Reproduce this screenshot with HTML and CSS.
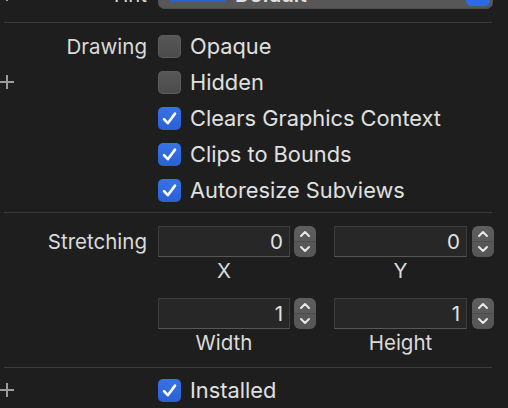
FILE: index.html
```html
<!DOCTYPE html>
<html>
<head>
<meta charset="utf-8">
<link rel="stylesheet" href="styles.css">
</head>
<body>
<div class="inspector">
  <div class="row tint-row">
    <div class="label"><span class="plus"></span><span>Tint</span></div>
    <div class="popup">
      <span class="swatch"></span>
      <span class="popup-text">Default</span>
      <span class="popup-stepper"></span>
    </div>
  </div>
  <div class="sep first"></div>

  <section class="drawing">
    <div class="row">
      <div class="label"><span></span><span>Drawing</span></div>
      <div class="check"><span class="box"></span><span>Opaque</span></div>
    </div>
    <div class="row">
      <div class="label"><span class="plus"></span><span></span></div>
      <div class="check"><span class="box"></span><span>Hidden</span></div>
    </div>
    <div class="row">
      <div class="label"></div>
      <div class="check"><span class="box on"><svg viewBox="0 0 23 23" width="23" height="23"><path d="M6 12.2 L9.8 16.2 L17 6.6" /></svg></span><span>Clears Graphics Context</span></div>
    </div>
    <div class="row">
      <div class="label"></div>
      <div class="check"><span class="box on"><svg viewBox="0 0 23 23" width="23" height="23"><path d="M6 12.2 L9.8 16.2 L17 6.6" /></svg></span><span>Clips to Bounds</span></div>
    </div>
    <div class="row">
      <div class="label"></div>
      <div class="check"><span class="box on"><svg viewBox="0 0 23 23" width="23" height="23"><path d="M6 12.2 L9.8 16.2 L17 6.6" /></svg></span><span>Autoresize Subviews</span></div>
    </div>
  </section>
  <div class="sep"></div>

  <section class="stretching">
    <div class="row stretch-row">
      <div class="label field-label"><span></span><span>Stretching</span></div>
      <div class="pairs">
        <div class="pair">
          <div class="stepper-group">
            <div class="field">0</div>
            <div class="stepper"><svg viewBox="0 0 22 31" width="22" height="31"><path d="M7 10 L11 6 L15 10" /><path d="M7 21 L11 25 L15 21" /></svg></div>
          </div>
          <div class="caption">X</div>
        </div>
        <div class="pair">
          <div class="stepper-group">
            <div class="field">0</div>
            <div class="stepper"><svg viewBox="0 0 22 31" width="22" height="31"><path d="M7 10 L11 6 L15 10" /><path d="M7 21 L11 25 L15 21" /></svg></div>
          </div>
          <div class="caption">Y</div>
        </div>
      </div>
    </div>
    <div class="row stretch-row second">
      <div class="label field-label"></div>
      <div class="pairs">
        <div class="pair">
          <div class="stepper-group">
            <div class="field">1</div>
            <div class="stepper"><svg viewBox="0 0 22 31" width="22" height="31"><path d="M7 10 L11 6 L15 10" /><path d="M7 21 L11 25 L15 21" /></svg></div>
          </div>
          <div class="caption">Width</div>
        </div>
        <div class="pair">
          <div class="stepper-group">
            <div class="field">1</div>
            <div class="stepper"><svg viewBox="0 0 22 31" width="22" height="31"><path d="M7 10 L11 6 L15 10" /><path d="M7 21 L11 25 L15 21" /></svg></div>
          </div>
          <div class="caption">Height</div>
        </div>
      </div>
    </div>
  </section>
  <div class="sep"></div>

  <section class="installed">
    <div class="row">
      <div class="label"><span class="plus"></span><span></span></div>
      <div class="check"><span class="box on"><svg viewBox="0 0 23 23" width="23" height="23"><path d="M6 12.2 L9.8 16.2 L17 6.6" /></svg></span><span>Installed</span></div>
    </div>
  </section>
</div>
</body>
</html>
```

FILE: styles.css
```css
html, body {
  margin: 0;
  padding: 0;
  background: #1e1e1e;
  overflow: hidden;
}

.inspector {
  width: 508px;
  height: 408px;
  overflow: hidden;
  font-family: Inter, "Liberation Sans", sans-serif;
  font-size: 20.5px;
  color: #dfdfdf;
}

.row {
  display: grid;
  grid-template-columns: 147px 1fr;
  column-gap: 11px;
  align-items: center;
  height: 36px;
}

.label {
  display: flex;
  justify-content: space-between;
  align-items: center;
  height: 100%;
  color: #dadada;
}

.plus {
  position: relative;
  width: 14px;
  height: 14px;
  display: block;
}
.plus::before,
.plus::after {
  content: "";
  position: absolute;
  background: #9c9c9c;
}
.plus::before {
  left: 0;
  top: 6px;
  width: 14px;
  height: 2px;
}
.plus::after {
  left: 6px;
  top: 0;
  width: 2px;
  height: 14px;
}

/* Tint popup (cut off at the top) */
.tint-row {
  height: 30px;
  margin-top: -21px;
}
.popup {
  width: 335px;
  height: 30px;
  box-sizing: border-box;
  background: #575757;
  border-radius: 7px;
  box-shadow: inset 0 -1px 0 #4d4d4d;
  display: flex;
  align-items: center;
  padding: 0 3px 0 12px;
}
.swatch {
  width: 56px;
  height: 15px;
  background: #2a62d3;
  border-radius: 2px;
}
.popup-text {
  margin-left: 9px;
  flex: 1;
  color: #e2e2e2;
  font-weight: 600;
}
.popup-stepper {
  width: 24px;
  height: 24px;
  background: #2f6be0;
  border-radius: 5px;
}

.sep {
  height: 1px;
  background: #3a3a3a;
  margin: 0 16px 0 4px;
}
.sep.first {
  margin-top: 13px;
}

.drawing {
  padding: 5px 0 4px;
}

.check {
  display: flex;
  align-items: center;
  gap: 9px;
  color: #e0e0e0;
  font-size: 21.8px;
}
.box {
  width: 23px;
  height: 23px;
  box-sizing: border-box;
  border-radius: 5px;
  background: linear-gradient(#585858, #4b4b4b);
  box-shadow: inset 0 0 0 1px #5c5c5c;
  flex: none;
  display: block;
}
.box.on {
  background: linear-gradient(#3773e4, #2a61d6);
  box-shadow: none;
}
.box svg {
  display: block;
}
.box svg path {
  fill: none;
  stroke: #ffffff;
  stroke-width: 2.6;
  stroke-linecap: round;
  stroke-linejoin: round;
}

/* Stretching */
.stretching {
  padding: 13px 0 12px;
}
.stretch-row {
  height: auto;
  align-items: start;
}
.stretch-row.second {
  margin-top: 15px;
}
.field-label {
  height: 31px;
}
.pairs {
  display: grid;
  grid-template-columns: 158px 160px;
  column-gap: 18px;
}
.stepper-group {
  display: flex;
  gap: 4px;
}
.pair:last-child .stepper-group {
  gap: 5px;
}
.pair:last-child .field {
  width: 133px;
}
.field {
  width: 132px;
  height: 31px;
  box-sizing: border-box;
  background: #272727;
  border: 1px solid #3d3d3d;
  border-bottom-color: #575757;
  text-align: right;
  padding-right: 6px;
  line-height: 29px;
  color: #e2e2e2;
}
.stepper {
  width: 22px;
  height: 31px;
  border-radius: 6px;
  background: linear-gradient(#5e5e5e 0, #5a5a5a 15px, #4c4c4c 15px, #4c4c4c 16px, #575757 16px);
}
.stepper svg {
  display: block;
}
.stepper svg path {
  fill: none;
  stroke: #e8e8e8;
  stroke-width: 2;
  stroke-linecap: round;
  stroke-linejoin: round;
}
.caption {
  width: 132px;
  text-align: center;
  line-height: 24px;
  margin-top: 2px;
  color: #dadada;
}
.pair:last-child .caption {
  width: 133px;
}

.installed {
  padding-top: 4px;
}
```
